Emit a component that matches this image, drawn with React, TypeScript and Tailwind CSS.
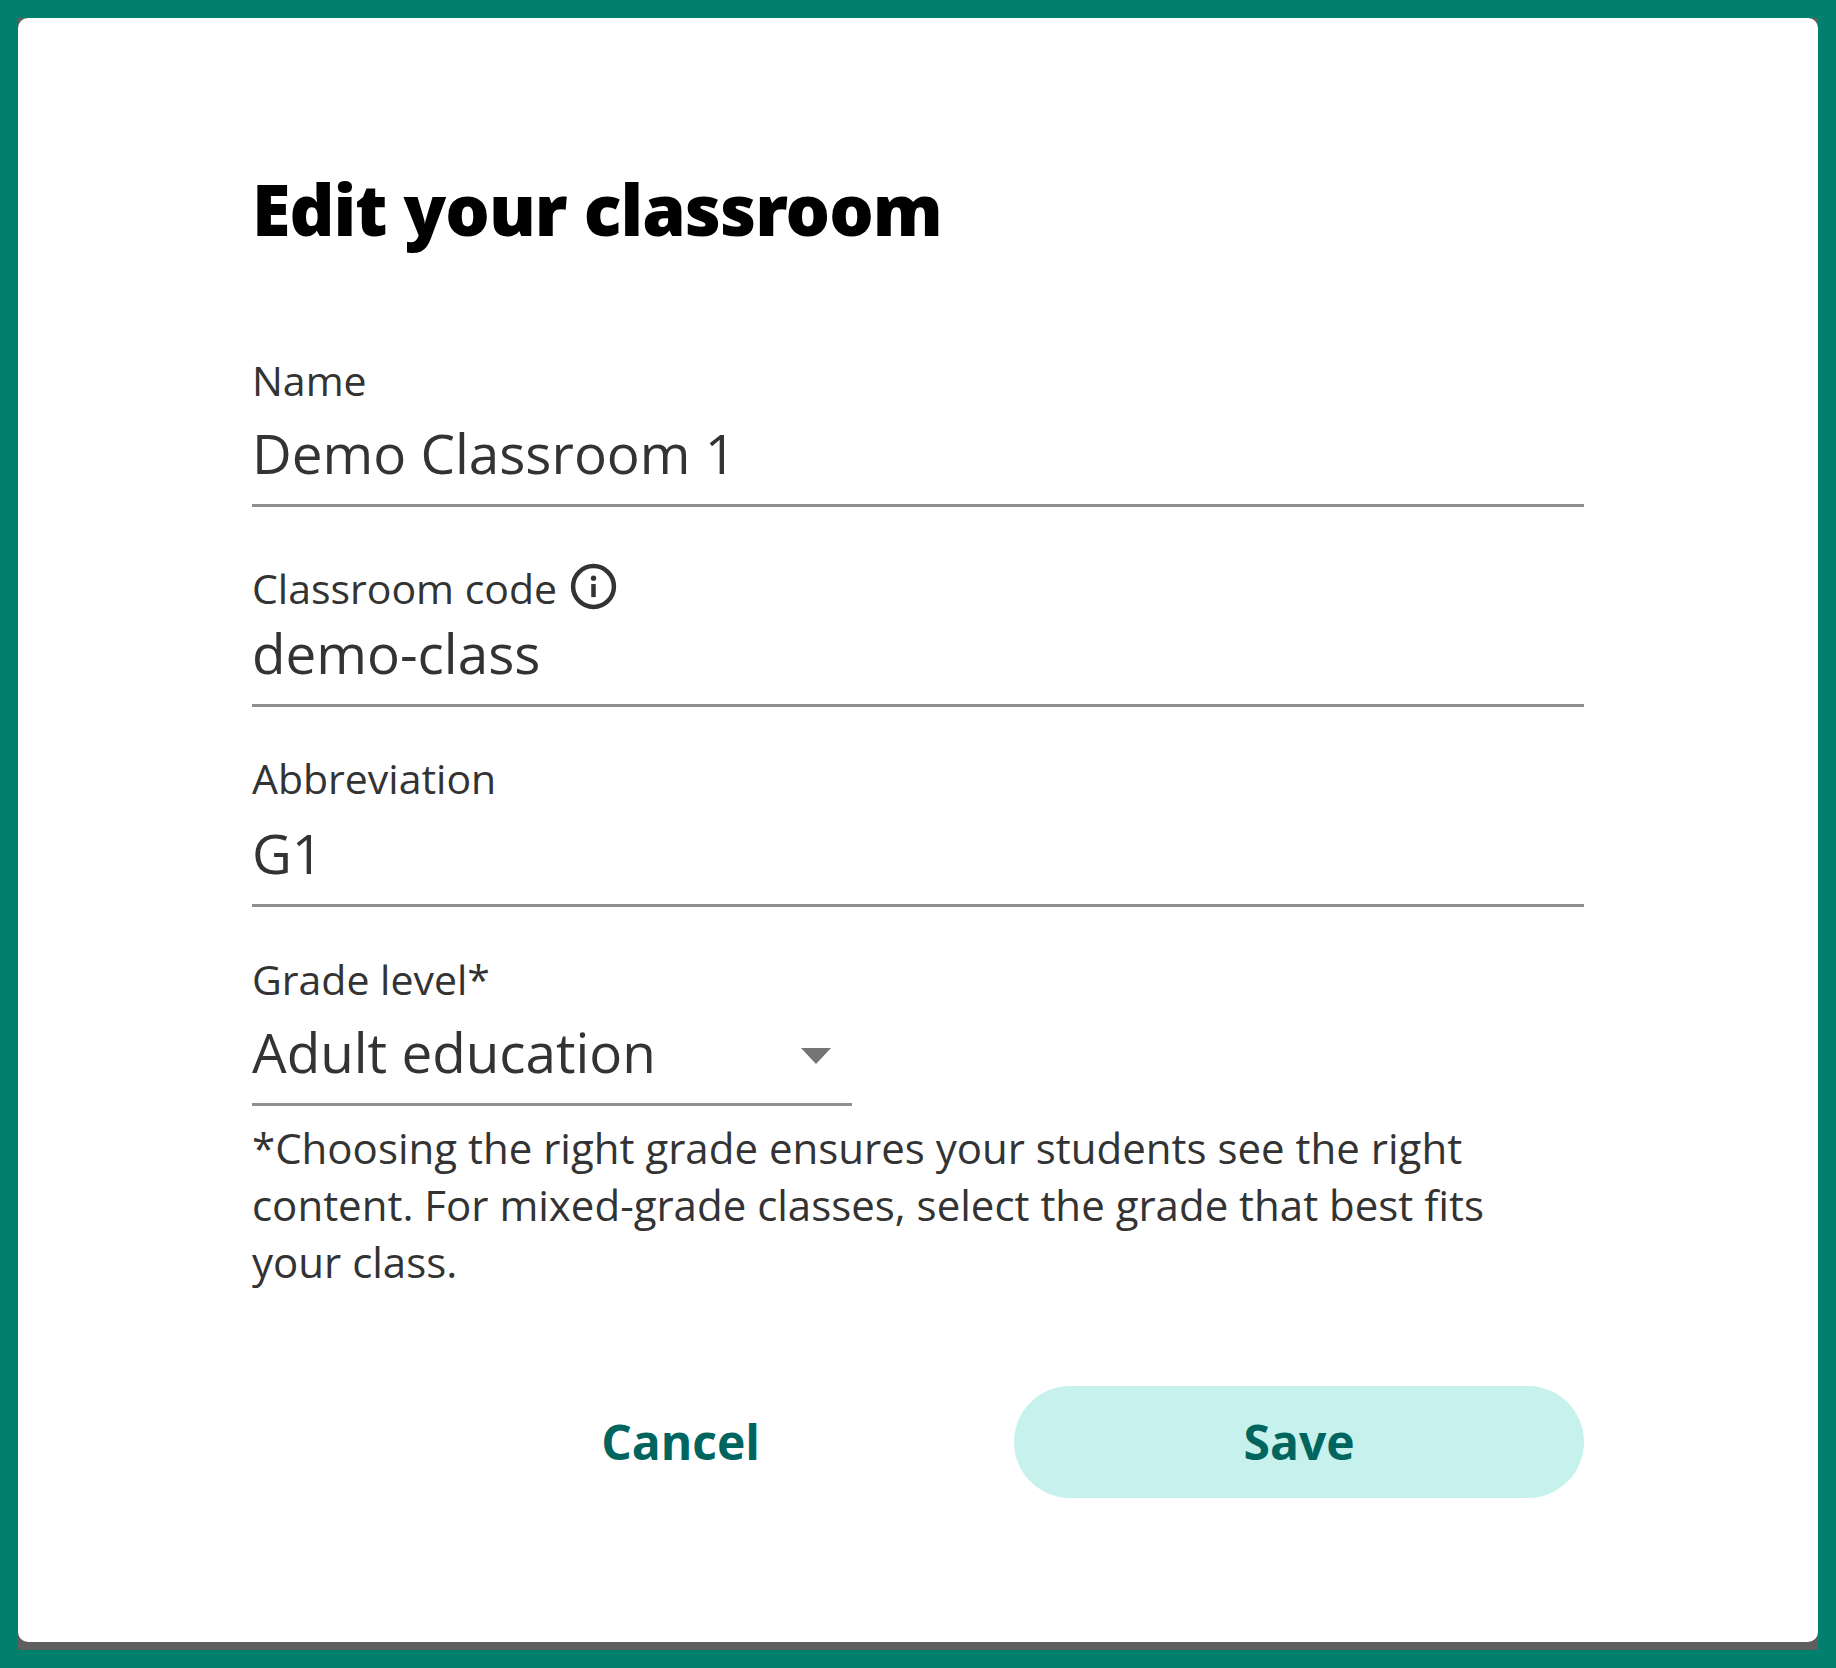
const openSans = "font-['Open_Sans',sans-serif]";

function Label({ children }: { children: React.ReactNode }) {
  return <div className="h-[56px] flex items-center gap-[12px] text-[41px] text-[#333333]">{children}</div>;
}

function InfoIcon() {
  return (
    <svg width="49" height="49" viewBox="0 0 24 24" fill="none" className="-mt-[6px]">
      <circle cx="12" cy="12" r="10" stroke="#333333" strokeWidth="2.2" />
      <rect x="10.9" y="10.8" width="2.2" height="6.4" fill="#333333" />
      <circle cx="12" cy="7.9" r="1.3" fill="#333333" />
    </svg>
  );
}

function Field({ label, value, gap, info }: { label: string; value: string; gap: string; info?: boolean }) {
  return (
    <div className="h-[200px] border-b-[3px] border-[#8f8f8f] flex flex-col justify-end pb-[15px]">
      <Label>
        {label}
        {info && <InfoIcon />}
      </Label>
      <div className={`${gap} text-[54.8px] leading-[72px] text-[#333333]`}>{value}</div>
    </div>
  );
}

export default function App() {
  return (
    <div className={`min-h-screen bg-[#01806d] p-[18px] ${openSans}`}>
      <div className="h-[1632px] bg-[#5f5f5f]">
        <div className="h-[1624px] bg-white rounded-[10px] px-[234px] pt-[158px]">
          <h1 className="h-[66px] text-[70px] leading-[66px] tracking-[-1px] font-black text-black font-['Noto_Sans',sans-serif]">
            Edit your classroom
          </h1>
          <div className="mt-[65px]">
            <Field label="Name" value="Demo Classroom 1" gap="mt-[8px]" />
            <Field label="Classroom code" value="demo-class" gap="mt-[0px]" info />
            <Field label="Abbreviation" value="G1" gap="mt-[10px]" />
            <div className="w-[600px] h-[199px] border-b-[3px] border-[#8f8f8f] flex flex-col justify-end pb-[15px]">
              <Label>Grade level*</Label>
              <div className="mt-[8px] flex items-center justify-between pr-[21px] text-[54.8px] leading-[72px] text-[#333333]">
                Adult education
                <svg width="30" height="16" viewBox="0 0 30 16" className="mt-[8px]">
                  <path d="M0 0h30L15 16z" fill="#757575" />
                </svg>
              </div>
            </div>
          </div>
          <p className="mt-[13px] text-[42px] leading-[57px] text-[#333333]">
            *Choosing the right grade ensures your students see the right content. For mixed-grade classes, select the
            grade that best fits your class.
          </p>
          <div className="mt-[96px] flex items-center justify-end">
            <button className="text-[48px] font-bold text-[#00655f] mr-[254px]">Cancel</button>
            <button className="w-[570px] h-[112px] rounded-full bg-[#c7f1ec] text-[48px] font-bold text-[#00655f]">
              Save
            </button>
          </div>
        </div>
      </div>
    </div>
  );
}
